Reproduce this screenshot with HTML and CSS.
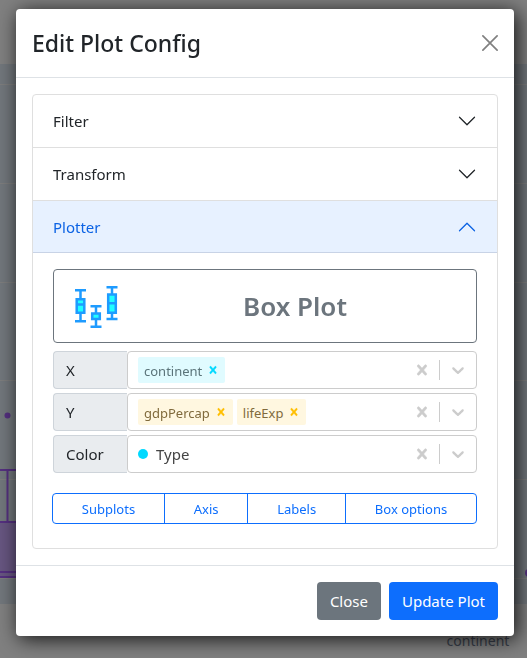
FILE: index.html
```html
<!DOCTYPE html>
<html lang="en">
<head>
<meta charset="utf-8">
<meta name="viewport" content="width=device-width, initial-scale=1">
<title>Edit Plot Config</title>
<link rel="stylesheet" href="styles.css">
</head>
<body>
<svg class="symbols" aria-hidden="true">
  <symbol id="chevron" viewBox="0 0 16 16"><path fill="currentColor" fill-rule="evenodd" d="M1.646 4.646a.5.5 0 0 1 .708 0L8 10.293l5.646-5.647a.5.5 0 0 1 .708.708l-6 6a.5.5 0 0 1-.708 0l-6-6a.5.5 0 0 1 0-.708z"/></symbol>
  <symbol id="cross" viewBox="0 0 20 20"><path fill="currentColor" stroke="currentColor" stroke-width=".6" d="M14.348 14.849c-0.469 0.469-1.229 0.469-1.697 0l-2.651-3.030-2.651 3.029c-0.469 0.469-1.229 0.469-1.697 0-0.469-0.469-0.469-1.229 0-1.697l2.758-3.15-2.759-3.152c-0.469-0.469-0.469-1.228 0-1.697s1.228-0.469 1.697 0l2.652 3.031 2.651-3.031c0.469-0.469 1.228-0.469 1.697 0s0.469 1.229 0 1.697l-2.758 3.152 2.758 3.15c0.469 0.469 0.469 1.229 0 1.698z"/></symbol>
  <symbol id="down" viewBox="0 0 20 20"><path fill="currentColor" d="M4.516 7.548c0.436-0.446 1.043-0.481 1.576 0l3.908 3.747 3.908-3.747c0.533-0.481 1.141-0.446 1.574 0 0.436 0.445 0.408 1.197 0 1.615-0.406 0.418-4.695 4.502-4.695 4.502-0.217 0.223-0.502 0.335-0.787 0.335s-0.57-0.112-0.789-0.335c0 0-4.287-4.084-4.695-4.502s-0.436-1.17 0-1.615z"/></symbol>
</svg>

<svg class="page-plot" viewBox="0 0 527 658" preserveAspectRatio="xMidYMin slice" aria-hidden="true">
  <rect width="527" height="658" fill="#808080"/>
  <rect y="64" width="527" height="540" fill="#72777c"/>
  <g stroke="#7d7d7d"><path d="M0 84.500H527M0 183.500H527M0 282.500H527M0 380.500H527M0 479.500H527M0 578.500H527"/></g>
  <g fill="none" stroke="#553080" stroke-width="2">
    <rect x="-40" y="522" width="100" height="55" fill="#675681"/>
    <path d="M-20 470H40M7.500 470V522M-40 572H60"/>
  </g>
  <circle cx="7.500" cy="415.500" r="3" fill="#553080"/>
  <circle cx="529" cy="573" r="4" fill="#553080"/>
  <text class="axis-title" x="478" y="646" text-anchor="middle">continent</text>
</svg>

<main class="modal" role="dialog" aria-labelledby="title">
  <header class="modal-header">
    <h1 class="modal-title" id="title">Edit Plot Config</h1>
    <button class="close" type="button" aria-label="Close dialog">
      <svg viewBox="0 0 16 16"><path d="M.9.9l14.200 14.200M15.100.9L.9 15.100" fill="none" stroke="currentColor" stroke-width="1.700" stroke-linecap="round"/></svg>
    </button>
  </header>

  <div class="modal-body">
    <div class="accordion">
      <button class="accordion-button" type="button" aria-expanded="false">Filter<svg><use href="#chevron"/></svg></button>
      <button class="accordion-button" type="button" aria-expanded="false">Transform<svg><use href="#chevron"/></svg></button>
      <button class="accordion-button open" type="button" aria-expanded="true">Plotter<svg><use href="#chevron"/></svg></button>
      <section class="accordion-body">
        <button class="plot-type" type="button">
          <svg class="plot-icon" viewBox="0 0 44 44" aria-hidden="true">
            <g fill="none" stroke="#1e9bff" stroke-width="2.500">
              <path d="M1 6.200H12M6.500 6.200V15M6.500 29V37.300M1 37.300H12"/>
              <path d="M16.500 22.200H27.500M22 22.200V29M22 35V42.700M16.500 42.700H27.500"/>
              <path d="M32.500 3.200H43.500M38 3.200V10M38 29V35M32.500 35H43.500"/>
              <g fill="#20ffff">
                <path d="M2.700 15.200h7.600v13.500h-7.600zM2.700 20.500h7.600"/>
                <path d="M18.200 29.500h7.600v5.500h-7.600z"/>
                <path d="M34.200 10.500h7.600v18.200h-7.600zM34.200 19.200h7.600"/>
              </g>
            </g>
          </svg>
          <span class="plot-name">Box Plot</span>
        </button>

        <div class="field">
          <label for="x-field">X</label>
          <div class="picker">
            <div class="values">
              <span class="tag cyan">continent<button type="button" aria-label="Remove continent"><svg><use href="#cross"/></svg></button></span>
              <input id="x-field" type="text">
            </div>
            <button class="clear" type="button" aria-label="Clear X"><svg><use href="#cross"/></svg></button>
            <button class="toggle" type="button" aria-label="Open X"><svg><use href="#down"/></svg></button>
          </div>
        </div>
        <div class="field">
          <label for="y-field">Y</label>
          <div class="picker">
            <div class="values">
              <span class="tag amber">gdpPercap<button type="button" aria-label="Remove gdpPercap"><svg><use href="#cross"/></svg></button></span>
              <span class="tag amber">lifeExp<button type="button" aria-label="Remove lifeExp"><svg><use href="#cross"/></svg></button></span>
              <input id="y-field" type="text">
            </div>
            <button class="clear" type="button" aria-label="Clear Y"><svg><use href="#cross"/></svg></button>
            <button class="toggle" type="button" aria-label="Open Y"><svg><use href="#down"/></svg></button>
          </div>
        </div>
        <div class="field">
          <label for="color-field">Color</label>
          <div class="picker">
            <div class="values">
              <span class="single">Type</span>
              <input id="color-field" type="text">
            </div>
            <button class="clear" type="button" aria-label="Clear Color"><svg><use href="#cross"/></svg></button>
            <button class="toggle" type="button" aria-label="Open Color"><svg><use href="#down"/></svg></button>
          </div>
        </div>

        <div class="button-group">
          <button type="button">Subplots</button>
          <button type="button">Axis</button>
          <button type="button">Labels</button>
          <button type="button">Box options</button>
        </div>
      </section>
    </div>
  </div>

  <footer class="modal-footer">
    <button class="btn secondary" type="button">Close</button>
    <button class="btn primary" type="button">Update Plot</button>
  </footer>
</main>
</body>
</html>
```
FILE: styles.css
```css
* { box-sizing: border-box; }

body {
  margin: 0;
  padding: 9px 13px 22px 16px;
  background: #808080;
  color: #212529;
  font: 15px/24px "Segoe UI", "Noto Sans", sans-serif;
}

button, input { font: inherit; color: inherit; }
button { padding: 0; border: 0; background: none; cursor: pointer; }
svg { display: block; }

.symbols { position: absolute; width: 0; height: 0; }

.page-plot {
  position: fixed;
  inset: 0;
  z-index: -1;
  width: 100%;
  height: 100%;
}
.axis-title { font-size: 14px; fill: #3a404c; }

.modal {
  background: #fff;
  border-radius: 4px;
  box-shadow: 3px 3px 20px rgba(0, 0, 0, .85);
}

.modal-header {
  display: flex;
  align-items: center;
  justify-content: space-between;
  padding: 16px;
  border-bottom: 1px solid #dee2e6;
}
.modal-title { margin: 0; font-size: 23px; font-weight: 500; line-height: 36px; }
.close { color: #808080; }
.close svg { width: 16px; height: 16px; }

.modal-body { padding: 16px; }

.accordion { border: 1px solid #dfdfdf; border-radius: 4px; overflow: hidden; }
.accordion-button {
  display: flex;
  align-items: center;
  justify-content: space-between;
  width: 100%;
  height: 53px;
  padding: 0 20px;
  border-bottom: 1px solid #dfdfdf;
}
.accordion-button svg { width: 20px; height: 20px; }
.accordion-button.open { height: 52px; background: #e7f1ff; color: #0c63e4; border-color: #c8d3e6; }
.accordion-button.open svg { transform: rotate(180deg); }
.accordion-body { padding: 16px 20px 24px; }

.plot-type {
  display: flex;
  align-items: center;
  width: 100%;
  height: 74px;
  margin-bottom: 8px;
  padding: 0 20px;
  border: 1px solid #6c757d;
  border-radius: 4px;
  color: #6c757d;
}
.plot-icon { width: 44px; height: 44px; }
.plot-name { flex: 1; padding-left: 16px; font-size: 26px; font-weight: 600; line-height: 32px; text-align: center; }

.field { display: flex; height: 38px; margin-bottom: 4px; }
.field label {
  width: 74px;
  padding: 6px 12px;
  border: 1px solid #ced4da;
  border-right: 0;
  border-radius: 4px 0 0 4px;
  background: #e9ecef;
}
.picker {
  display: flex;
  align-items: center;
  flex: 1;
  min-width: 0;
  border: 1px solid #ccc;
  border-radius: 4px;
}
.values { display: flex; align-items: center; flex: 1; gap: 4px; min-width: 0; padding-left: 10px; }
.values input { flex: 1; width: 0; min-width: 0; padding: 0; border: 0; outline: 0; background: none; }
.tag { display: flex; height: 26px; padding-left: 6px; border-radius: 2px; font-size: 13px; line-height: 28px; }
.tag button { width: 23px; padding-left: 4px; }
.tag svg { width: 14px; height: 14px; }
.tag.cyan { background: #e0fbff; color: #5b747a; }
.tag.cyan button { color: #00d9ff; }
.tag.amber { background: #fff7e0; color: #806a3c; }
.tag.amber button { color: #ffbf00; }
.single { display: flex; align-items: center; gap: 8px; color: #444; }
.single::before { content: ""; width: 10px; height: 10px; border-radius: 50%; background: #00d9ff; }
.clear, .toggle { width: 36px; height: 20px; color: #ccc; }
.clear { border-right: 1px solid #ccc; }
.clear svg, .toggle svg { width: 20px; height: 20px; margin: 0 auto; }

.button-group {
  display: flex;
  margin: 20px 0 0 -1px;
  border: 1px solid #0d6efd;
  border-radius: 4px;
  color: #0d6efd;
  font-size: 13px;
}
.button-group button { flex: 1 1 auto; height: 29px; padding: 0 8px; }
.button-group button + button { border-left: 1px solid #0d6efd; }

.modal-footer {
  display: flex;
  justify-content: flex-end;
  gap: 8px;
  padding: 16px;
  border-top: 1px solid #dee2e6;
}
.btn { height: 38px; padding: 0 13px; border-radius: 4px; color: #fff; }
.secondary { background: #6c757d; }
.primary { background: #0d6efd; }
```
